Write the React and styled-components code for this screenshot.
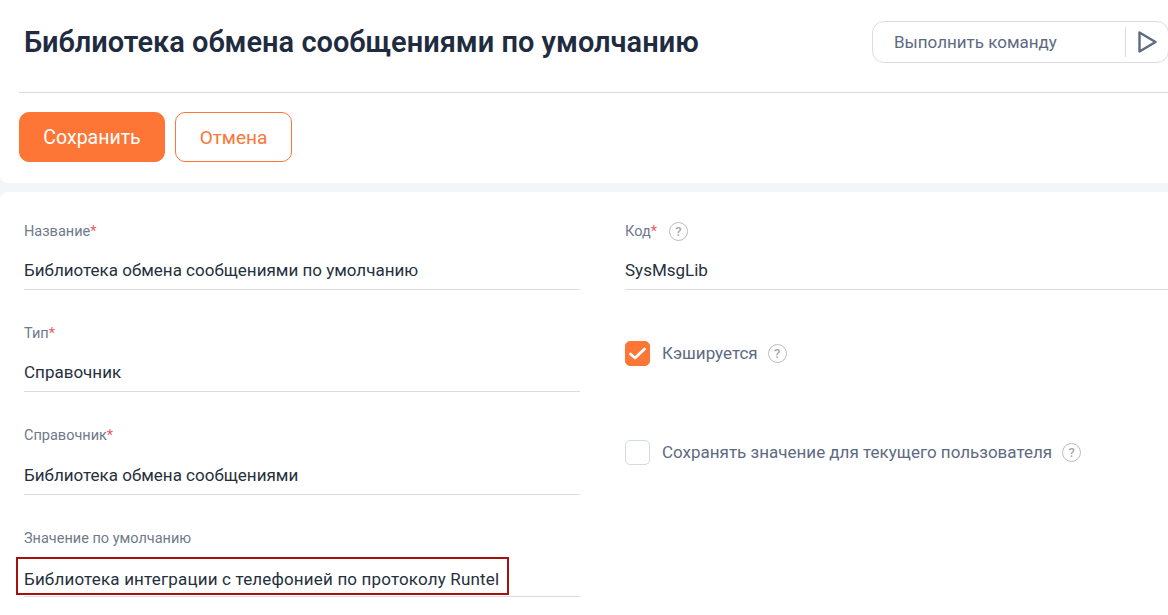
import React from 'react';
import styled, { createGlobalStyle } from 'styled-components';

const GlobalStyle = createGlobalStyle`
  html, body {
    margin: 0;
    padding: 0;
    background: #fff;
    overflow: hidden;
  }
  body {
    font-family: Roboto, "Liberation Sans", sans-serif;
    color: #26303d;
  }
`;

const Page = styled.div`
  display: flex;
  flex-direction: column;
  gap: 9px;
  width: 1168px;
  height: 615px;
  overflow: hidden;
  background: #f3f6f9;
`;

const Top = styled.div`
  background: #fff;
  border-bottom-left-radius: 8px;
`;

const Header = styled.header`
  display: flex;
  justify-content: space-between;
  align-items: flex-start;
  height: 93px;
  margin-left: 19px;
  padding: 21px 0 0 5px;
  box-sizing: border-box;
  border-bottom: 1px solid #d9dbde;
`;

const Title = styled.h1`
  margin: 0;
  font-size: 29px;
  line-height: 42px;
  font-weight: 600;
  color: #1f2c3f;
`;

const CommandBox = styled.div`
  display: flex;
  align-items: center;
  width: 297px;
  height: 42px;
  margin-right: -1px;
  padding-left: 21px;
  box-sizing: border-box;
  border: 1px solid #d9dde3;
  border-radius: 12px;
  color: #5e6a82;
  font-size: 17px;
`;

const CommandText = styled.span`
  flex: 1;
`;

const RunButton = styled.div`
  display: flex;
  align-items: center;
  justify-content: center;
  width: 42px;
  height: 30px;
  border-left: 1px solid #d9dde3;
`;

const Toolbar = styled.div`
  display: flex;
  gap: 10px;
  padding: 19px 0 21px 19px;
`;

const Button = styled.button`
  height: 50px;
  width: ${(p) => (p.$primary ? '146px' : '117px')};
  border: 1px solid #fb7637;
  border-radius: 10px;
  background: ${(p) => (p.$primary ? '#fd7636' : '#fff')};
  color: ${(p) => (p.$primary ? '#fff' : '#fb7637')};
  font-family: inherit;
  font-size: ${(p) => (p.$primary ? '19.5px' : '19px')};
  padding: 0;
`;

const Form = styled.main`
  flex: 1;
  display: grid;
  grid-template-columns: 556px 1fr;
  column-gap: 45px;
  padding: 27px 0 0 24px;
  box-sizing: border-box;
  background: #fff;
  border-top-left-radius: 8px;
`;

const Column = styled.div`
  display: flex;
  flex-direction: column;
`;

const Field = styled.div`
  height: 102.4px;
  flex-shrink: 0;
  box-sizing: border-box;
`;

const Label = styled.label`
  display: flex;
  align-items: center;
  gap: 12px;
  height: 24px;
  color: #6f7a8c;
  font-size: 14.5px;
`;

const Required = styled.span`
  color: #ee5a5f;
`;

const Value = styled.div`
  height: 47px;
  padding-top: 12px;
  box-sizing: border-box;
  border-bottom: 1px solid #d9dbde;
  font-size: 17px;
  line-height: 30px;
  color: #26303d;
`;

const Highlighted = styled.span`
  position: relative;
  display: inline-block;
  padding-top: 2px;
  letter-spacing: 0.17px;

  &::after {
    content: '';
    position: absolute;
    left: -8px;
    right: -10px;
    top: -5px;
    bottom: -1px;
    border: 2px solid #a80f0f;
  }
`;

const CheckRow = styled.div`
  display: flex;
  align-items: center;
  height: 26px;
  margin-top: ${(p) => p.$top}px;
  font-size: 17px;
  color: #5e6a82;
`;

const Box = styled.span`
  display: flex;
  align-items: center;
  justify-content: center;
  width: 25px;
  height: 25px;
  margin-right: 12px;
  box-sizing: border-box;
  border-radius: 5px;
  border: 1px solid ${(p) => (p.$checked ? '#fd7636' : '#d5d9e0')};
  background: ${(p) => (p.$checked ? '#fd7636' : '#fff')};
`;

const HelpMark = styled.span`
  display: inline-flex;
  align-items: center;
  justify-content: center;
  width: 19px;
  height: 19px;
  margin-left: ${(p) => p.$left || 0}px;
  box-sizing: border-box;
  border: 1.5px solid #bdbdbd;
  border-radius: 50%;
  color: #a8a8a8;
  font-size: 13px;
  font-weight: 500;
`;

function App() {
  return (
    <Page>
      <GlobalStyle />
      <Top>
        <Header>
          <Title>Библиотека обмена сообщениями по умолчанию</Title>
          <CommandBox>
            <CommandText>Выполнить команду</CommandText>
            <RunButton>
              <svg width="22" height="24" viewBox="0 0 22 24" fill="none">
                <path
                  d="M3.5 2.5 L19.5 12 L3.5 21.5 Z"
                  stroke="#5e6a82"
                  strokeWidth="2.4"
                  strokeLinejoin="round"
                />
              </svg>
            </RunButton>
          </CommandBox>
        </Header>

        <Toolbar>
          <Button $primary>Сохранить</Button>
          <Button>Отмена</Button>
        </Toolbar>
      </Top>

      <Form>
        <Column>
          <Field>
            <Label>
              <span>
                Название<Required>*</Required>
              </span>
            </Label>
            <Value>Библиотека обмена сообщениями по умолчанию</Value>
          </Field>
          <Field>
            <Label>
              <span>
                Тип<Required>*</Required>
              </span>
            </Label>
            <Value>Справочник</Value>
          </Field>
          <Field>
            <Label>
              <span>
                Справочник<Required>*</Required>
              </span>
            </Label>
            <Value>Библиотека обмена сообщениями</Value>
          </Field>
          <Field>
            <Label>Значение по умолчанию</Label>
            <Value>
              <Highlighted>Библиотека интеграции с телефонией по протоколу Runtel</Highlighted>
            </Value>
          </Field>
        </Column>

        <Column>
          <Field>
            <Label>
              <span>
                Код<Required>*</Required>
              </span>
              <HelpMark>?</HelpMark>
            </Label>
            <Value>SysMsgLib</Value>
          </Field>
          <CheckRow $top={19}>
            <Box $checked>
              <svg width="19" height="15" viewBox="0 0 19 15" fill="none">
                <path
                  d="M2.5 8 L7 12 L16.5 3"
                  stroke="#fff"
                  strokeWidth="2.8"
                  strokeLinecap="round"
                  strokeLinejoin="round"
                />
              </svg>
            </Box>
            Кэшируется
            <HelpMark $left={10}>?</HelpMark>
          </CheckRow>
          <CheckRow $top={73}>
            <Box />
            Сохранять значение для текущего пользователя
            <HelpMark $left={10}>?</HelpMark>
          </CheckRow>
        </Column>
      </Form>
    </Page>
  );
}

export default App;
